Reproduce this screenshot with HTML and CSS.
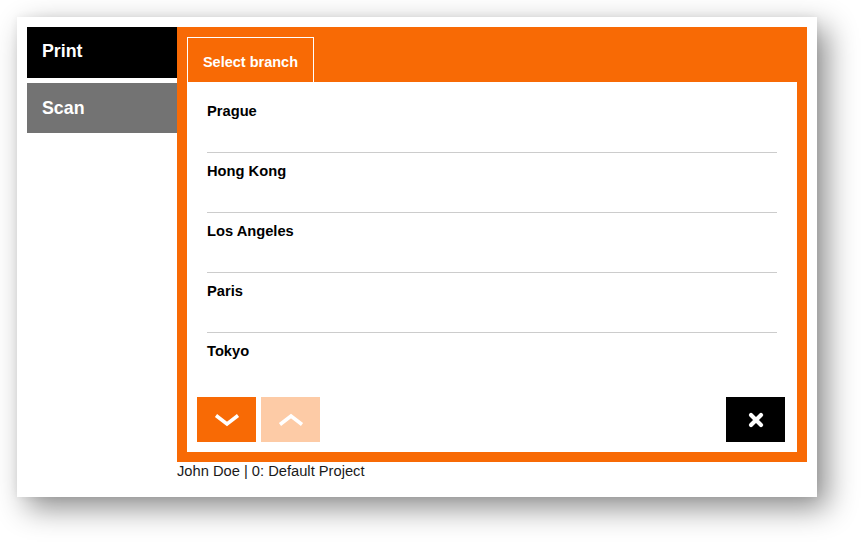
FILE: index.html
```html
<!DOCTYPE html>
<html>
<head>
<meta charset="utf-8">
<link rel="stylesheet" href="styles.css">
</head>
<body>
<div class="card">
  <nav class="sidebar">
    <div class="nav-item active">Print</div>
    <div class="nav-item">Scan</div>
  </nav>
  <div class="main">
    <div class="panel">
      <div class="tabs">
        <div class="tab">Select branch</div>
      </div>
      <div class="content">
        <ul class="list">
          <li>Prague</li>
          <li>Hong Kong</li>
          <li>Los Angeles</li>
          <li>Paris</li>
          <li>Tokyo</li>
        </ul>
        <div class="actions">
          <div class="btn btn-orange">
            <svg width="26" height="14" viewBox="0 0 26 14"><path d="M2 2.5 L13 11 L24 2.5" fill="none" stroke="#fff" stroke-width="3.5"/></svg>
          </div>
          <div class="btn btn-light">
            <svg width="26" height="14" viewBox="0 0 26 14"><path d="M2 11.5 L13 3 L24 11.5" fill="none" stroke="#fff" stroke-width="3.5"/></svg>
          </div>
          <div class="spacer"></div>
          <div class="btn btn-black">
            <svg width="16" height="16" viewBox="0 0 16 16"><path d="M3 3 L13 13 M13 3 L3 13" fill="none" stroke="#fff" stroke-width="4.2" stroke-linecap="round"/></svg>
          </div>
        </div>
      </div>
    </div>
    <div class="footer">John Doe | 0: Default Project</div>
  </div>
</div>
</body>
</html>
```
FILE: styles.css
```css
html, body {
  margin: 0;
  padding: 0;
  background: #fff;
}
body {
  padding: 17px;
  min-height: 545px;
  box-sizing: border-box;
  font-family: "Liberation Sans", Arial, sans-serif;
}
.card {
  width: 800px;
  height: 480px;
  box-sizing: border-box;
  padding: 10px;
  background: #fff;
  display: flex;
  box-shadow: 10px 11px 28px rgba(0,0,0,0.45), 0 0 8px rgba(0,0,0,0.06);
}
.sidebar {
  width: 150px;
  display: flex;
  flex-direction: column;
  gap: 5px;
}
.nav-item {
  height: 50px;
  background: #737373;
  color: #fff;
  font-weight: bold;
  font-size: 17.8px;
  line-height: 50px;
  padding-left: 15px;
}
.nav-item.active {
  background: #000;
  height: 51px;
  line-height: 49px;
}
.main {
  width: 630px;
  display: flex;
  flex-direction: column;
}
.panel {
  background: #f86a05;
  height: 435px;
  box-sizing: border-box;
  padding: 10px;
  display: flex;
  flex-direction: column;
}
.tabs {
  display: flex;
  height: 45px;
}
.tab {
  width: 127px;
  box-sizing: border-box;
  border: 1px solid #fff;
  border-bottom: none;
  color: #fff;
  font-weight: bold;
  font-size: 14.5px;
  line-height: 48px;
  text-align: center;
}
.content {
  flex: 1;
  background: #fff;
  padding: 11px 12px 10px 10px;
  display: flex;
  flex-direction: column;
}
.list {
  list-style: none;
  margin: 0 8px 0 10px;
  padding: 0;
  flex: 1;
}
.list li {
  height: 59px;
  border-bottom: 1px solid #cccccc;
  font-weight: bold;
  font-size: 14.7px;
  color: #000;
  line-height: 37px;
}
.list li:last-child {
  border-bottom: none;
}
.actions {
  display: flex;
  gap: 5px;
  height: 45px;
}
.spacer {
  flex: 1;
}
.btn {
  width: 59px;
  height: 45px;
  display: flex;
  align-items: center;
  justify-content: center;
}
.btn-orange { background: #f86a05; }
.btn-light { background: #fdcba6; }
.btn-black { background: #000; }
.footer {
  font-size: 14.7px;
  color: #1a1a1a;
  line-height: 18px;
}
```
